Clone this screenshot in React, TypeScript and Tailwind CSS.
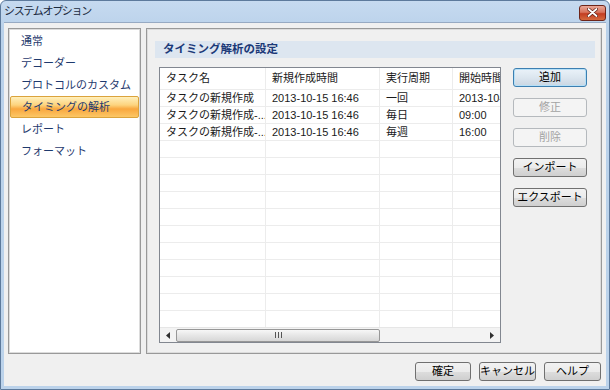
import clsx from "clsx";

const cn = clsx;

const NAV = ["通常", "デコーダー", "プロトコルのカスタム", "タイミングの解析", "レポート", "フォーマット"];

const ROWS: string[][] = [
  ["タスクの新規作成", "2013-10-15 16:46", "一回", "2013-10-15 16:46"],
  ["タスクの新規作成-...", "2013-10-15 16:46", "毎日", "09:00"],
  ["タスクの新規作成-...", "2013-10-15 16:46", "毎週", "16:00"],
];

const COLS = ["w-[106px]", "w-[114px]", "w-[73px]", "w-[70px]"];

function Btn({ children, disabled, primary, className }: { children: React.ReactNode; disabled?: boolean; primary?: boolean; className?: string }) {
  return (
    <div
      className={cn(
        "flex items-center justify-center rounded-[3px] border text-[11px] leading-none whitespace-nowrap",
        disabled
          ? "border-[#b5b9bd] bg-[#f4f4f4] text-[#a3a3a3]"
          : primary
            ? "border-[#3c7fb1] bg-[linear-gradient(#eaf2f9,#dce6ef_50%,#cad6e2)] text-black shadow-[inset_0_0_0_1px_#b6e0f7]"
            : "border-[#707070] bg-[linear-gradient(#f2f2f2,#ebebeb_50%,#dddddd_51%,#cfcfcf)] text-black",
        className,
      )}
    >
      {children}
    </div>
  );
}

function Row({ cells, header }: { cells: string[]; header?: boolean }) {
  return (
    <div className={cn("flex shrink-0 border-b border-[#ececec]", header ? "h-[22px]" : "h-[17px]")}>
      {COLS.map((w, i) => (
        <div
          key={i}
          className={cn(
            "shrink-0 flex items-center px-[6px] overflow-hidden whitespace-nowrap text-[#1a1a1a]",
            w,
            i < 3 && "border-r border-[#ececec]",
          )}
        >
          {cells[i] ?? ""}
        </div>
      ))}
    </div>
  );
}

export default function App() {
  return (
    <div className="w-[610px] h-[390px] flex flex-col bg-[linear-gradient(#c6daf0,#b9d1ea_30px,#bcd3eb)] border border-[#5d7a9c] rounded-t-[6px] font-['Liberation_Sans','Noto_Sans_CJK_JP',sans-serif] text-[11px] overflow-hidden">
      {/* title bar */}
      <div className="h-[21px] shrink-0 flex items-center pl-[3px] pr-[3px]">
        <span className="text-[11px] text-[#1c2b3e] tracking-[-1.3px]">システムオプション</span>
        <div className="ml-auto mt-[2px] w-[27px] h-[16px] rounded-[3px] border border-[#6e2519] bg-[linear-gradient(#e9a899,#d8735c_45%,#c33d22_55%,#d56a3e)] flex items-center justify-center">
          <svg width="11" height="9" viewBox="0 0 11 9">
            <path d="M1.5 1 L9.5 8 M9.5 1 L1.5 8" stroke="#5a1b10" strokeWidth="3.2" strokeLinecap="round" />
            <path d="M1.5 1 L9.5 8 M9.5 1 L1.5 8" stroke="#ffffff" strokeWidth="1.8" strokeLinecap="round" />
          </svg>
        </div>
      </div>

      {/* client area */}
      <div className="flex-1 min-h-0 mx-[3px] mb-[3px] bg-[#f0f0f0] flex flex-col px-[4px] pt-[5px] pb-[5px] border-t border-[#97aac3]">
        <div className="flex-1 flex gap-[5px] min-h-0">
          {/* nav list */}
          <div className="w-[133px] shrink-0 bg-white border border-[#999999] shadow-[inset_0_0_0_1px_#dcdcdc] px-[1px] pt-[1px]">
            {NAV.map((item) => {
              const sel = item === "タイミングの解析";
              return (
                <div
                  key={item}
                  className={cn(
                    "h-[22px] flex items-center pl-[11px] text-[11px] text-[#1f3a6e] rounded-[2px]",
                    sel && "border border-[#dba33c] bg-[linear-gradient(#fff0bc,#fdd47e_40%,#f9a73e_60%,#fcc766)] pl-[10px]",
                  )}
                >
                  {item}
                </div>
              );
            })}
          </div>

          {/* settings panel */}
          <div className="flex-1 min-h-0 border border-[#999999] shadow-[inset_0_0_0_1px_#dcdcdc] flex flex-col pl-[8px] pr-[6px] pt-[12px] pb-[10px]">
            <div className="h-[17px] shrink-0 bg-[#dde6f0] flex items-center pl-[8px] text-[11.5px] font-bold text-[#1b3978]">
              タイミング解析の設定
            </div>
            <div className="flex-1 flex mt-[9px] pl-[4px] min-h-0">
              {/* table */}
              <div className="w-[342px] min-h-0 shrink-0 border border-[#828790] bg-white flex flex-col overflow-hidden">
                <Row header cells={["タスク名", "新規作成時間", "実行周期", "開始時間"]} />
                <div className="flex-1 min-h-0 flex flex-col overflow-hidden">
                  {ROWS.map((r, i) => (
                    <Row key={i} cells={r} />
                  ))}
                  {Array.from({ length: 12 }).map((_, i) => (
                    <Row key={"e" + i} cells={[]} />
                  ))}
                </div>
                {/* horizontal scrollbar */}
                <div className="h-[15px] shrink-0 flex items-center bg-[#f3f3f3] border-t border-[#e6e6e6]">
                  <div className="w-[16px] flex items-center justify-center">
                    <svg width="4" height="7" viewBox="0 0 4 7"><path d="M4 0 L0 3.5 L4 7 Z" fill="#303030" /></svg>
                  </div>
                  <div className="w-[204px] h-[13px] rounded-[2px] border border-[#979797] bg-[linear-gradient(#f7f7f7,#e6e6e6_50%,#d7d7d7)] flex items-center justify-center">
                    <svg width="7" height="6" viewBox="0 0 7 6">
                      <path d="M0.5 0 V6 M3.5 0 V6 M6.5 0 V6" stroke="#555" strokeWidth="1" />
                    </svg>
                  </div>
                  <div className="ml-auto w-[16px] flex items-center justify-center">
                    <svg width="4" height="7" viewBox="0 0 4 7"><path d="M0 0 L4 3.5 L0 7 Z" fill="#303030" /></svg>
                  </div>
                </div>
              </div>

              {/* action buttons */}
              <div className="ml-[12px] w-[74px] flex flex-col gap-[11px] pt-[1px]">
                <Btn primary className="h-[19px]">追加</Btn>
                <Btn disabled className="h-[19px]">修正</Btn>
                <Btn disabled className="h-[19px]">削除</Btn>
                <Btn className="h-[19px]">インポート</Btn>
                <Btn className="h-[19px]">エクスポート</Btn>
              </div>
            </div>
          </div>
        </div>

        {/* dialog buttons */}
        <div className="shrink-0 flex justify-end gap-[8px] mt-[8px] pr-[1px]">
          <Btn className="w-[56px] h-[19px]">確定</Btn>
          <Btn className="w-[57px] h-[19px]">キャンセル</Btn>
          <Btn className="w-[57px] h-[19px]">ヘルプ</Btn>
        </div>
      </div>
    </div>
  );
}
